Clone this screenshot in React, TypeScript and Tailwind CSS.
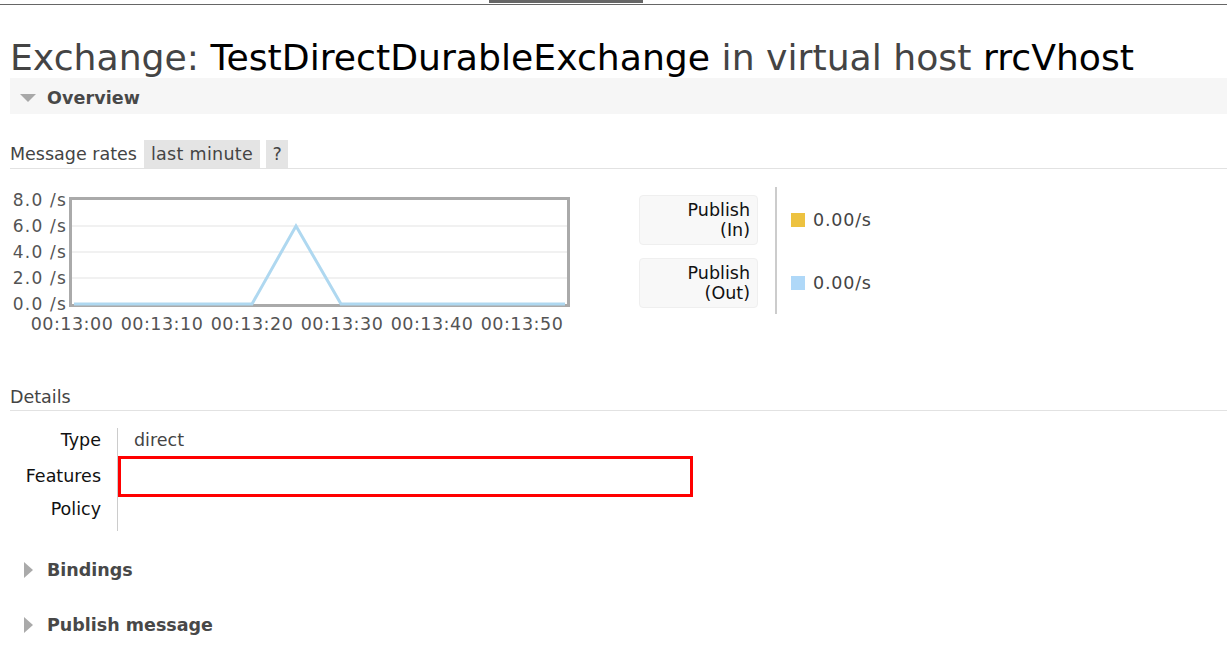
import React from 'react';

const FONT = "font-['DejaVu_Sans',Verdana,sans-serif]";

const yTicks = ['8.0 /s', '6.0 /s', '4.0 /s', '2.0 /s', '0.0 /s'];
const xTicks = ['00:13:00', '00:13:10', '00:13:20', '00:13:30', '00:13:40', '00:13:50'];

// chart coordinates are relative to the svg (page x - 10, page y - 186)
function RateChart() {
  const top = 13;
  const step = 26;
  const left = 62;
  const right = 557;
  const bottom = top + step * 4;
  const pts = [
    [left + 2, bottom],
    [242, bottom],
    [286, top + step],
    [331, bottom],
    [right - 2, bottom],
  ]
    .map((p) => p.join(','))
    .join(' ');

  return (
    <svg width={570} height={150} className="shrink-0">
      {[1, 2, 3].map((i) => (
        <line key={i} x1={left} x2={right} y1={top + step * i} y2={top + step * i} stroke="#ececec" strokeWidth={1.5} />
      ))}
      <rect x={left - 1.5} y={top - 1.5} width={right - left + 3} height={bottom - top + 3} fill="none" stroke="#aaaaaa" strokeWidth={3} />
      <polyline points={pts} fill="none" stroke="#afd8f0" strokeWidth={3} strokeLinejoin="miter" />
      {yTicks.map((t, i) => (
        <text
          key={t}
          x={57}
          y={top + step * i + 6}
          textAnchor="end"
          fontSize={17}
          letterSpacing={1.2}
          fill="#545454"
          fontFamily="DejaVu Sans, Verdana, sans-serif"
        >
          {t}
        </text>
      ))}
      {xTicks.map((t, i) => (
        <text
          key={t}
          x={left + 90 * i}
          y={143}
          textAnchor="middle"
          fontSize={17.5}
          letterSpacing={0.5}
          fill="#545454"
          fontFamily="DejaVu Sans, Verdana, sans-serif"
        >
          {t}
        </text>
      ))}
    </svg>
  );
}

function LegendBox({ top, bottom }: { top: string; bottom: string }) {
  return (
    <div className="w-[119px] h-[50px] rounded-[4px] bg-[#f8f8f8] border border-[#efefef] pr-[7px] pt-[4px] text-right leading-[20px] text-[#111]">
      <div>{top}</div>
      <div>{bottom}</div>
    </div>
  );
}

function RateValue({ color }: { color: string }) {
  return (
    <div className="h-[50px] flex items-center gap-[8px]">
      <span className={`w-[14px] h-[14px] ${color}`} />
      <span className="text-[#444] tracking-[0.8px]">0.00/s</span>
    </div>
  );
}

function Collapsed({ label }: { label: string }) {
  return (
    <div className="flex items-center h-[20px] leading-[20px]">
      <svg width={9} height={16} viewBox="0 0 9 16" className="ml-[14px]">
        <polygon points="0,0 9,8 0,16" fill="#aaaaaa" />
      </svg>
      <span className="ml-[14px] font-bold text-[#484848]">{label}</span>
    </div>
  );
}

export default function App() {
  return (
    <div className={`min-h-[659px] w-[1227px] bg-white text-[17.5px] text-[#444] ${FONT}`}>
      {/* Top nav strip */}
      <div className="h-[5px] border-b border-[#666]">
        <div className="ml-[489px] w-[154px] h-[3px] bg-[#666]" />
      </div>

      <div className="pl-[10px]">
        <h1 className="mt-[35px] text-[36.2px] leading-[36px] text-[#444] whitespace-nowrap">
          Exchange: <span className="text-black">TestDirectDurableExchange</span> in virtual host{' '}
          <span className="text-black">rrcVhost</span>
        </h1>

        {/* Overview section header */}
        <div className="mt-[2px] h-[36px] bg-[#f6f6f6] flex items-center pt-[4px]">
          <svg width={16} height={8} viewBox="0 0 16 8" className="ml-[10px]">
            <polygon points="0,0 16,0 8,8" fill="#a8a8a8" />
          </svg>
          <span className="ml-[11px] font-bold text-[#484848] tracking-[0.1px]">Overview</span>
        </div>

        {/* Message rates */}
        <div className="mt-[26px] flex items-end border-b border-[#e2e2e2]">
          <span className="leading-[28px]">Message rates</span>
          <span className="ml-[7px] h-[28px] leading-[28px] px-[7px] bg-[#e4e4e4] tracking-[0.3px]">last minute</span>
          <span className="ml-[6px] w-[22px] h-[28px] leading-[28px] text-center bg-[#e4e4e4]">?</span>
        </div>

        <div className="mt-[18px] flex">
          <RateChart />
          <div className="ml-[59px] pt-[8px] flex flex-col gap-[13px]">
            <LegendBox top="Publish" bottom="(In)" />
            <LegendBox top="Publish" bottom="(Out)" />
          </div>
          <div className="ml-[17px] h-[127px] border-l-2 border-[#cccccc] pt-[8px] pl-[14px] flex flex-col gap-[13px]">
            <RateValue color="bg-[#edc240]" />
            <RateValue color="bg-[#afd8f8]" />
          </div>
        </div>

        {/* Details */}
        <div className="mt-[50px] leading-[20px] pb-[3px] border-b border-[#e2e2e2]">Details</div>

        <div className="mt-[17px] grid grid-cols-[107px_auto] leading-[20px] w-fit">
          <div className="h-[28px] pt-[2px] pr-[16px] text-right text-[#111]">Type</div>
          <div className="h-[28px] pt-[2px] pl-[16px] border-l border-[#cccccc]">direct</div>

          <div className="h-[41px] pt-[10px] pr-[16px] text-right text-[#111]">Features</div>
          <div className="h-[41px] border-l border-[#cccccc]">
            <div className="w-[575px] h-[41px] border-[3px] border-[#ff0000]" />
          </div>

          <div className="h-[34px] pt-[2px] pr-[16px] text-right text-[#111]">Policy</div>
          <div className="h-[34px] border-l border-[#cccccc]" />
        </div>

        <div className="mt-[29px]">
          <Collapsed label="Bindings" />
        </div>
        <div className="mt-[35px]">
          <Collapsed label="Publish message" />
        </div>
      </div>
    </div>
  );
}
